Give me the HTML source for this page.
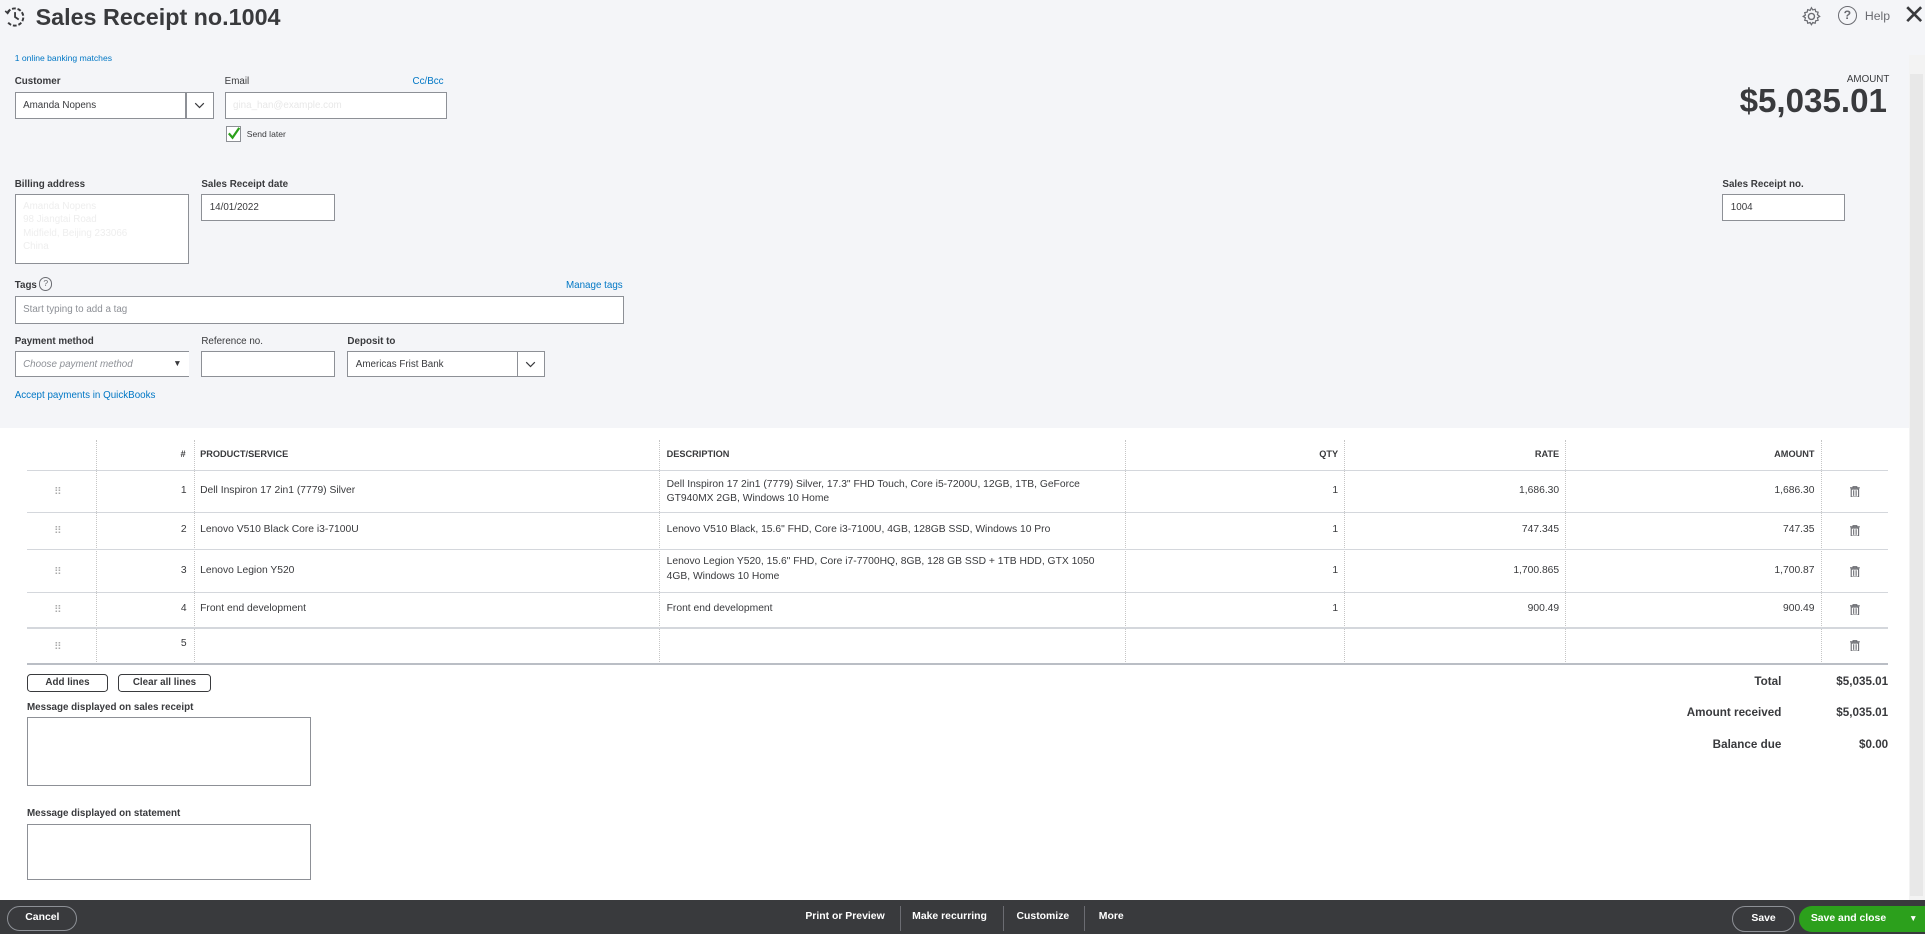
<!DOCTYPE html>
<html><head><meta charset="utf-8"><style>
html,body{margin:0;padding:0;}
body{width:1568px;height:761px;zoom:1.22768;position:relative;overflow:hidden;background:#fff;font-family:"Liberation Sans",sans-serif;color:#393a3d;}
.a{position:absolute;}
.lbl{position:absolute;font-size:8px;font-weight:bold;color:#393a3d;}
.inp{position:absolute;background:#fff;border:1px solid #8d9096;box-sizing:border-box;font-size:8px;padding-left:6px;display:flex;align-items:center;}
.link{position:absolute;font-size:8px;color:#0077c5;}
.t{position:absolute;font-size:8.4px;color:#393a3d;}
.vl{position:absolute;width:0;border-left:1px dotted #c6c6c6;top:358px;height:183px;}
.hl{position:absolute;left:22px;width:1516px;height:1px;background:#d4d7dc;}
.btn{position:absolute;border:1px solid #393a3d;border-radius:3px;background:#fff;font-size:8px;font-weight:bold;text-align:center;box-sizing:border-box;line-height:13px;}
.trash{position:absolute;left:1507px;width:8px;height:9px;}
.ft{position:absolute;color:#fff;font-size:8.5px;font-weight:bold;}
</style></head><body>
<div class="a" style="left:0;top:0;width:1568px;height:349px;background:#f4f5f8"></div>
<div class="a" style="left:1555px;top:45px;width:13px;height:688px;background:#f3f3f3"></div>
<div class="a" style="left:1556px;top:60px;width:10px;height:670px;background:#e8e8e8"></div>
<!-- header -->
<svg class="a" style="left:3px;top:5px" width="18" height="18" viewBox="0 0 18 18"><path d="M3 5 A7 7 0 1 1 3 13" fill="none" stroke="#393a3d" stroke-width="1.6" stroke-dasharray="3 1.5"/><path d="M9 5 V9 L12 11" fill="none" stroke="#393a3d" stroke-width="1.5"/><path d="M1 4 L3 6 L5 3" fill="none" stroke="#393a3d" stroke-width="1.3"/></svg>
<div class="a" style="left:29px;top:3px;font-size:19px;font-weight:bold;color:#393a3d">Sales Receipt no.1004</div>
<svg class="a" style="left:1467px;top:5px" width="17" height="17" viewBox="0 0 24 24"><circle cx="12" cy="12" r="3.5" fill="none" stroke="#6b6c72" stroke-width="1.6"/><path d="M12 2 l1.5 2.5 2.8-.8 .6 2.8 2.8.6-.8 2.8L21.5 12l-2.6 1.6.8 2.8-2.8.6-.6 2.8-2.8-.8L12 21.5l-1.5-2.5-2.8.8-.6-2.8-2.8-.6.8-2.8L2.5 12l2.6-1.6-.8-2.8 2.8-.6.6-2.8 2.8.8z" fill="none" stroke="#6b6c72" stroke-width="1.4"/></svg>
<div class="a" style="left:1497px;top:5px;width:14px;height:14px;border:1.5px solid #6b6c72;border-radius:50%;font-size:10px;font-weight:bold;color:#6b6c72;text-align:center;line-height:14px">?</div>
<div class="a" style="left:1519px;top:7px;font-size:10px;color:#6b6c72">Help</div>
<div class="a" style="left:1550px;top:0px;font-size:22px;color:#393a3d;line-height:26px">✕</div>

<div class="link" style="left:12px;top:43px;font-size:7px">1 online banking matches</div>
<div class="lbl" style="left:12px;top:62px">Customer</div>
<div class="inp" style="left:12px;top:75px;width:162px;height:22px">Amanda Nopens</div>
<div class="a" style="left:151px;top:76px;width:1px;height:20px;background:#8d9096"></div>
<svg class="a" style="left:158px;top:83px" width="9" height="6"><path d="M1 1 L4.5 4.5 L8 1" fill="none" stroke="#393a3d" stroke-width="1"/></svg>
<div class="lbl" style="left:183px;top:62px;font-weight:normal">Email</div>
<div class="link" style="left:336px;top:62px">Cc/Bcc</div>
<div class="inp" style="left:183px;top:75px;width:181px;height:22px;color:#e8e8e8">gina_han@example.com</div>
<div class="a" style="left:184px;top:103px;width:11px;height:11px;border:1px solid #8d9096;background:#fff"></div>
<svg class="a" style="left:185px;top:103px" width="11" height="11"><path d="M1.5 6 L4.5 9.5 L10 1.5" fill="none" stroke="#2ca01c" stroke-width="1.8"/></svg>
<div class="a" style="left:201px;top:105px;font-size:7px">Send later</div>
<div class="a" style="left:1460px;top:60px;width:79px;text-align:right;font-size:8px;color:#393a3d">AMOUNT</div>
<div class="a" style="left:1360px;top:68px;width:177px;text-align:right;font-size:27px;font-weight:bold;color:#393a3d">$5,035.01</div>

<div class="lbl" style="left:12px;top:146px">Billing address</div>
<div class="a" style="left:12px;top:158px;width:142px;height:57px;border:1px solid #8d9096;box-sizing:border-box;background:#fff;font-size:8px;color:#eee;padding:4px 6px;line-height:11px">Amanda Nopens<br>98 Jiangtai Road<br>Midfield, Beijing 233066<br>China</div>
<div class="lbl" style="left:164px;top:146px">Sales Receipt date</div>
<div class="inp" style="left:164px;top:158px;width:109px;height:22px">14/01/2022</div>
<div class="lbl" style="left:1403px;top:146px">Sales Receipt no.</div>
<div class="inp" style="left:1403px;top:158px;width:100px;height:22px">1004</div>

<div class="lbl" style="left:12px;top:228px">Tags</div>
<div class="a" style="left:32px;top:226px;width:9px;height:9px;border:1px solid #6b6c72;border-radius:50%;font-size:7px;text-align:center;line-height:9px;color:#6b6c72">?</div>
<div class="link" style="left:461px;top:228px">Manage tags</div>
<div class="inp" style="left:12px;top:241px;width:496px;height:23px;color:#8d9096">Start typing to add a tag</div>

<div class="lbl" style="left:12px;top:274px">Payment method</div>
<div class="inp" style="left:12px;top:286px;width:142px;height:21px;color:#8d9096;font-style:italic">Choose payment method</div>
<div class="a" style="left:135px;top:287px;width:19px;height:19px;background:#fff;font-size:7px;text-align:center;line-height:19px">▼</div>
<div class="lbl" style="left:164px;top:274px;font-weight:normal">Reference no.</div>
<div class="inp" style="left:164px;top:286px;width:109px;height:21px"></div>
<div class="lbl" style="left:283px;top:274px">Deposit to</div>
<div class="inp" style="left:283px;top:286px;width:161px;height:21px">Americas Frist Bank</div>
<div class="a" style="left:421px;top:287px;width:1px;height:19px;background:#8d9096"></div>
<svg class="a" style="left:428px;top:294px" width="9" height="6"><path d="M1 1 L4.5 4.5 L8 1" fill="none" stroke="#393a3d" stroke-width="1"/></svg>
<div class="link" style="left:12px;top:318px">Accept payments in QuickBooks</div>

<!-- table -->
<div class="vl" style="left:78px"></div><div class="vl" style="left:158px"></div><div class="vl" style="left:537px"></div><div class="vl" style="left:916px"></div><div class="vl" style="left:1095px"></div><div class="vl" style="left:1275px"></div><div class="vl" style="left:1483px"></div>
<div class="hl" style="top:383px"></div><div class="hl" style="top:417px"></div><div class="hl" style="top:447px"></div><div class="hl" style="top:482px"></div><div class="hl" style="top:511px"></div><div class="hl" style="top:540px;height:2px;background:#babec5"></div>
<div class="t" style="left:147px;top:366px;font-weight:bold;font-size:7.5px">#</div>
<div class="t" style="left:163px;top:366px;font-weight:bold;font-size:7.5px">PRODUCT/SERVICE</div>
<div class="t" style="left:543px;top:366px;font-weight:bold;font-size:7.5px">DESCRIPTION</div>
<div class="t" style="left:1040px;top:366px;width:50px;text-align:right;font-weight:bold;font-size:7.5px">QTY</div>
<div class="t" style="left:1220px;top:366px;width:50px;text-align:right;font-weight:bold;font-size:7.5px">RATE</div>
<div class="t" style="left:1400px;top:366px;width:78px;text-align:right;font-weight:bold;font-size:7.5px">AMOUNT</div>

<div class="t" style="left:44px;top:396px;color:#aaa">⠿</div><div class="t" style="left:44px;top:428px;color:#aaa">⠿</div><div class="t" style="left:44px;top:461px;color:#aaa">⠿</div><div class="t" style="left:44px;top:492px;color:#aaa">⠿</div><div class="t" style="left:44px;top:522px;color:#aaa">⠿</div>
<div class="t" style="left:140px;top:395px;width:12px;text-align:right">1</div>
<div class="t" style="left:140px;top:427px;width:12px;text-align:right">2</div>
<div class="t" style="left:140px;top:460px;width:12px;text-align:right">3</div>
<div class="t" style="left:140px;top:491px;width:12px;text-align:right">4</div>
<div class="t" style="left:140px;top:520px;width:12px;text-align:right">5</div>
<div class="t" style="left:163px;top:395px">Dell Inspiron 17 2in1 (7779) Silver</div>
<div class="t" style="left:163px;top:427px">Lenovo V510 Black Core i3-7100U</div>
<div class="t" style="left:163px;top:460px">Lenovo Legion Y520</div>
<div class="t" style="left:163px;top:491px">Front end development</div>
<div class="t" style="left:543px;top:389px;line-height:12px;width:355px">Dell Inspiron 17 2in1 (7779) Silver, 17.3" FHD Touch, Core i5-7200U, 12GB, 1TB, GeForce GT940MX 2GB, Windows 10 Home</div>
<div class="t" style="left:543px;top:427px">Lenovo V510 Black, 15.6" FHD, Core i3-7100U, 4GB, 128GB SSD, Windows 10 Pro</div>
<div class="t" style="left:543px;top:452px;line-height:12px;width:355px">Lenovo Legion Y520, 15.6" FHD, Core i7-7700HQ, 8GB, 128 GB SSD + 1TB HDD, GTX 1050 4GB, Windows 10 Home</div>
<div class="t" style="left:543px;top:491px">Front end development</div>
<div class="t" style="left:1040px;top:395px;width:50px;text-align:right">1</div>
<div class="t" style="left:1040px;top:427px;width:50px;text-align:right">1</div>
<div class="t" style="left:1040px;top:460px;width:50px;text-align:right">1</div>
<div class="t" style="left:1040px;top:491px;width:50px;text-align:right">1</div>
<div class="t" style="left:1200px;top:395px;width:70px;text-align:right">1,686.30</div>
<div class="t" style="left:1200px;top:427px;width:70px;text-align:right">747.345</div>
<div class="t" style="left:1200px;top:460px;width:70px;text-align:right">1,700.865</div>
<div class="t" style="left:1200px;top:491px;width:70px;text-align:right">900.49</div>
<div class="t" style="left:1400px;top:395px;width:78px;text-align:right">1,686.30</div>
<div class="t" style="left:1400px;top:427px;width:78px;text-align:right">747.35</div>
<div class="t" style="left:1400px;top:460px;width:78px;text-align:right">1,700.87</div>
<div class="t" style="left:1400px;top:491px;width:78px;text-align:right">900.49</div>
<svg class="trash" style="top:396px" viewBox="0 0 8 9"><path d="M0 1.5H8M2.5 1.5V0.5H5.5V1.5M1 2.5H7V9H1Z M3 3.5V8 M5 3.5V8" fill="none" stroke="#6b6c72" stroke-width="0.9"/></svg>
<svg class="trash" style="top:428px" viewBox="0 0 8 9"><path d="M0 1.5H8M2.5 1.5V0.5H5.5V1.5M1 2.5H7V9H1Z M3 3.5V8 M5 3.5V8" fill="none" stroke="#6b6c72" stroke-width="0.9"/></svg>
<svg class="trash" style="top:461px" viewBox="0 0 8 9"><path d="M0 1.5H8M2.5 1.5V0.5H5.5V1.5M1 2.5H7V9H1Z M3 3.5V8 M5 3.5V8" fill="none" stroke="#6b6c72" stroke-width="0.9"/></svg>
<svg class="trash" style="top:492px" viewBox="0 0 8 9"><path d="M0 1.5H8M2.5 1.5V0.5H5.5V1.5M1 2.5H7V9H1Z M3 3.5V8 M5 3.5V8" fill="none" stroke="#6b6c72" stroke-width="0.9"/></svg>
<svg class="trash" style="top:521px" viewBox="0 0 8 9"><path d="M0 1.5H8M2.5 1.5V0.5H5.5V1.5M1 2.5H7V9H1Z M3 3.5V8 M5 3.5V8" fill="none" stroke="#6b6c72" stroke-width="0.9"/></svg>

<div class="btn" style="left:22px;top:549px;width:66px;height:15px">Add lines</div>
<div class="btn" style="left:96px;top:549px;width:76px;height:15px">Clear all lines</div>
<div class="lbl" style="left:22px;top:572px">Message displayed on sales receipt</div>
<div class="a" style="left:22px;top:584px;width:231px;height:56px;border:1px solid #8d9096;box-sizing:border-box"></div>
<div class="lbl" style="left:22px;top:658px">Message displayed on statement</div>
<div class="a" style="left:22px;top:671px;width:231px;height:46px;border:1px solid #8d9096;box-sizing:border-box"></div>

<div class="a" style="left:1300px;top:550px;width:151px;text-align:right;font-size:9.5px;font-weight:bold">Total</div>
<div class="a" style="left:1460px;top:550px;width:78px;text-align:right;font-size:9.5px;font-weight:bold">$5,035.01</div>
<div class="a" style="left:1300px;top:575px;width:151px;text-align:right;font-size:9.5px;font-weight:bold">Amount received</div>
<div class="a" style="left:1460px;top:575px;width:78px;text-align:right;font-size:9.5px;font-weight:bold">$5,035.01</div>
<div class="a" style="left:1300px;top:601px;width:151px;text-align:right;font-size:9.5px;font-weight:bold">Balance due</div>
<div class="a" style="left:1460px;top:601px;width:78px;text-align:right;font-size:9.5px;font-weight:bold">$0.00</div>

<!-- footer -->
<div class="a" style="left:0;top:733px;width:1568px;height:28px;background:#393a3d"></div>
<div class="a" style="left:6px;top:738px;width:57px;height:20px;border:1px solid #8d9096;border-radius:11px;box-sizing:border-box;color:#fff;font-size:8.5px;font-weight:bold;text-align:center;line-height:18px">Cancel</div>
<div class="ft" style="left:656px;top:742px">Print or Preview</div>
<div class="a" style="left:733px;top:738px;width:1px;height:20px;background:#6b6c72"></div>
<div class="ft" style="left:743px;top:742px">Make recurring</div>
<div class="a" style="left:817px;top:738px;width:1px;height:20px;background:#6b6c72"></div>
<div class="ft" style="left:828px;top:742px">Customize</div>
<div class="a" style="left:883px;top:738px;width:1px;height:20px;background:#6b6c72"></div>
<div class="ft" style="left:895px;top:742px">More</div>
<div class="a" style="left:1411px;top:738px;width:51px;height:21px;border:1px solid #8d9096;border-radius:11px;box-sizing:border-box;color:#fff;font-size:8.5px;font-weight:bold;text-align:center;line-height:19px">Save</div>
<div class="a" style="left:1465px;top:738px;width:103px;height:21px;background:#2ca01c;border-radius:11px 0 0 11px;color:#fff;font-size:8.5px;font-weight:bold;line-height:21px;padding-left:10px;box-sizing:border-box">Save and close<span style="position:absolute;left:90px;font-size:7px">▼</span></div>
</body></html>
